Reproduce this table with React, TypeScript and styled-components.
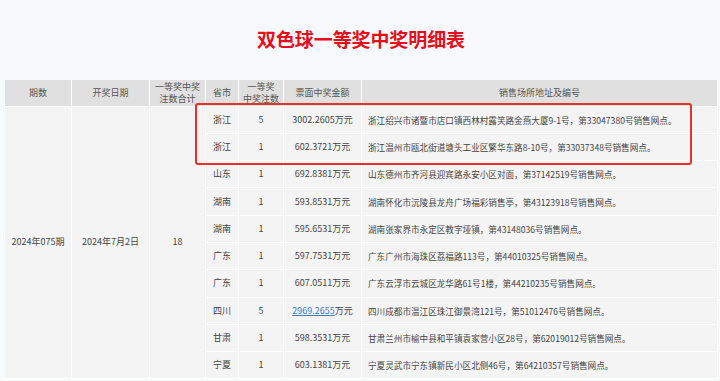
import React from "react";
import styled, { createGlobalStyle } from "styled-components";

const GlobalStyle = createGlobalStyle`
  html, body {
    margin: 0;
    padding: 0;
    background: #f8f9fd;
  }
  body {
    font-family: "Noto Sans CJK SC", "Noto Sans", sans-serif;
    color: #444;
  }
`;

const Page = styled.div`
  width: 720px;
  height: 381px;
  overflow: hidden;
  padding: 0 2px 0 4px;
  box-sizing: border-box;
`;

const TitleBar = styled.div`
  height: 77px;
  margin-bottom: 3px;
  display: flex;
  align-items: center;
  justify-content: center;
`;

const Title = styled.h1`
  margin: 0;
  font-size: 19px;
  line-height: 22px;
  font-weight: 700;
  color: #e3101b;
  letter-spacing: -0.1px;
`;

const TableWrap = styled.div`
  position: relative;
`;

const Table = styled.table`
  width: 100%;
  border-collapse: collapse;
  table-layout: fixed;
  font-size: 9px;
`;

const Th = styled.th<{ $w?: number }>`
  width: ${(p) => (p.$w ? `${p.$w}px` : "auto")};
  height: 26px;
  padding: 0;
  box-sizing: border-box;
  background: #e0e0e0;
  border: 1px solid #ffffff;
  border-top: none;
  color: #555;
  font-weight: 400;
  font-size: 9px;
  line-height: 12px;
  text-align: center;
  vertical-align: middle;
`;

const Td = styled.td<{ $left?: boolean }>`
  height: 27.3px;
  padding: ${(p) => (p.$left ? "0 0 0 6px" : "0")};
  box-sizing: border-box;
  background: #f4f4f4;
  border: 1px solid #ffffff;
  color: #444;
  font-size: ${(p) => (p.$left ? "8.6px" : "9px")};
  line-height: 12px;
  text-align: ${(p) => (p.$left ? "left" : "center")};
  vertical-align: middle;
  white-space: nowrap;
  overflow: hidden;
`;

const MoneyLink = styled.a`
  color: #3b7cc4;
  text-decoration: underline;
`;

const Highlight = styled.div`
  position: absolute;
  left: 191px;
  top: 23px;
  width: 497px;
  height: 62px;
  box-sizing: border-box;
  border: 2px solid #e8312c;
  border-radius: 3px;
  pointer-events: none;
`;

type Row = {
  prov: string;
  count: string;
  money: string;
  addr: string;
  link?: boolean;
};

const rows: Row[] = [
  { prov: "浙江", count: "5", money: "3002.2605", addr: "浙江绍兴市诸暨市店口镇西林村露笑路金燕大厦9-1号，第33047380号销售网点。" },
  { prov: "浙江", count: "1", money: "602.3721", addr: "浙江温州市瓯北街道塘头工业区繁华东路8-10号，第33037348号销售网点。" },
  { prov: "山东", count: "1", money: "692.8381", addr: "山东德州市齐河县迎宾路永安小区对面，第37142519号销售网点。" },
  { prov: "湖南", count: "1", money: "593.8531", addr: "湖南怀化市沅陵县龙舟广场福彩销售亭，第43123918号销售网点。" },
  { prov: "湖南", count: "1", money: "595.6531", addr: "湖南张家界市永定区教字垭镇，第43148036号销售网点。" },
  { prov: "广东", count: "1", money: "597.7531", addr: "广东广州市海珠区荔福路113号，第44010325号销售网点。" },
  { prov: "广东", count: "1", money: "607.0511", addr: "广东云浮市云城区龙华路61号1楼，第44210235号销售网点。" },
  { prov: "四川", count: "5", money: "2969.2655", addr: "四川成都市温江区珠江御景湾121号，第51012476号销售网点。", link: true },
  { prov: "甘肃", count: "1", money: "598.3531", addr: "甘肃兰州市榆中县和平镇袁家营小区28号，第62019012号销售网点。" },
  { prov: "宁夏", count: "1", money: "603.1381", addr: "宁夏灵武市宁东镇新民小区北侧46号，第64210357号销售网点。" },
];

export default function App() {
  return (
    <>
      <GlobalStyle />
      <Page>
        <TitleBar>
          <Title>双色球一等奖中奖明细表</Title>
        </TitleBar>
        <TableWrap>
          <Table>
            <thead>
              <tr>
                <Th $w={67}>期数</Th>
                <Th $w={78}>开奖日期</Th>
                <Th $w={56}>
                  一等奖中奖
                  <br />
                  注数合计
                </Th>
                <Th $w={33}>省市</Th>
                <Th $w={45}>
                  一等奖
                  <br />
                  中奖注数
                </Th>
                <Th $w={78}>票面中奖金额</Th>
                <Th>销售场所地址及编号</Th>
              </tr>
            </thead>
            <tbody>
              {rows.map((r, i) => (
                <tr key={i}>
                  {i === 0 && (
                    <>
                      <Td rowSpan={rows.length}>2024年075期</Td>
                      <Td rowSpan={rows.length}>2024年7月2日</Td>
                      <Td rowSpan={rows.length}>18</Td>
                    </>
                  )}
                  <Td>{r.prov}</Td>
                  <Td>{r.count}</Td>
                  <Td>
                    {r.link ? <MoneyLink href="#">{r.money}</MoneyLink> : r.money}万元
                  </Td>
                  <Td $left>{r.addr}</Td>
                </tr>
              ))}
            </tbody>
          </Table>
          <Highlight />
        </TableWrap>
      </Page>
    </>
  );
}
